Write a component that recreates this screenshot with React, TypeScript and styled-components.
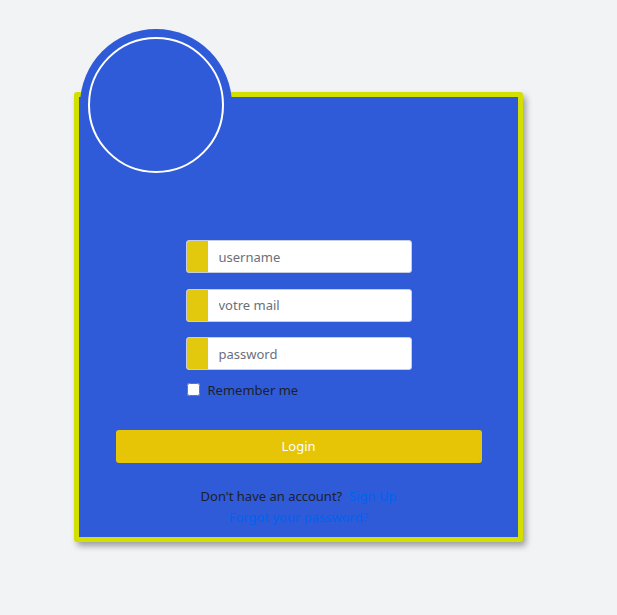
import React from "react";
import styled, { createGlobalStyle } from "styled-components";

const Global = createGlobalStyle`
  html, body { margin: 0; padding: 0; background: #f2f3f5; }
  body { font-family: "Noto Sans", "Open Sans", sans-serif; }
`;

const Page = styled.div`
  padding: 92px 0 0 74px;
  min-height: 615px;
  box-sizing: border-box;
`;

const Card = styled.div`
  position: relative;
  width: 449px;
  height: 450px;
  box-sizing: border-box;
  background: #2f5bd8;
  border: 5px solid #d3df00;
  border-radius: 3px;
  box-shadow: 3px 4px 6px rgba(0, 0, 0, 0.35);
  display: flex;
  flex-direction: column;
  align-items: center;
  padding-top: 143px;
`;

const Avatar = styled.div`
  position: absolute;
  left: 1px;
  top: -68px;
  width: 152px;
  height: 152px;
  border-radius: 50%;
  background: #2f5bd8;
  display: flex;
  align-items: center;
  justify-content: center;
`;

const Ring = styled.div`
  width: 132px;
  height: 132px;
  border-radius: 50%;
  border: 2px solid #ffffff;
`;

const Form = styled.div`
  width: 226px;
  display: flex;
  flex-direction: column;
  gap: 15.5px;
`;

const Field = styled.div`
  display: flex;
  height: 33px;
  box-sizing: border-box;
  border: 1px solid #c6cde0;
  border-radius: 3px;
  overflow: hidden;
  background: #ffffff;
`;

const FieldTab = styled.div`
  width: 21px;
  background: #e2c90d;
`;

const FieldInput = styled.input`
  flex: 1;
  border: none;
  outline: none;
  padding: 0 0 0 11px;
  font-family: "Noto Sans", "Open Sans", sans-serif;
  font-size: 13px;
  color: #333;
  background: transparent;
  &::placeholder { color: #6b6f7b; }
`;

const RememberRow = styled.label`
  display: flex;
  align-items: center;
  gap: 8px;
  margin-top: -5px;
  font-size: 13px;
  color: #1d1f2a;
  padding-left: 1px;
`;

const Check = styled.input`
  margin: 0;
  width: 13px;
  height: 13px;
`;

const LoginButton = styled.button`
  margin-top: 31px;
  width: 366px;
  height: 33px;
  border: none;
  border-radius: 3px;
  background: #e5c505;
  color: #ffffff;
  font-family: "Noto Sans", "Open Sans", sans-serif;
  font-size: 13px;
`;

const Footer = styled.div`
  margin-top: 24px;
  display: flex;
  flex-direction: column;
  align-items: center;
  gap: 2px;
  font-size: 13px;
  color: #1d1f2a;
  line-height: 19px;
`;

const Link = styled.a`
  color: #0063f0;
  text-decoration: none;
`;

export default function App() {
  return (
    <>
      <Global />
      <Page>
        <Card>
          <Avatar>
            <Ring />
          </Avatar>
          <Form>
            <Field>
              <FieldTab />
              <FieldInput placeholder="username" />
            </Field>
            <Field>
              <FieldTab />
              <FieldInput placeholder="votre mail" />
            </Field>
            <Field>
              <FieldTab />
              <FieldInput type="password" placeholder="password" />
            </Field>
            <RememberRow>
              <Check type="checkbox" />
              Remember me
            </RememberRow>
          </Form>
          <LoginButton>Login</LoginButton>
          <Footer>
            <div>
              Don't have an account?&nbsp; <Link href="#">Sign Up</Link>
            </div>
            <Link href="#">Forgot your password?</Link>
          </Footer>
        </Card>
      </Page>
    </>
  );
}
